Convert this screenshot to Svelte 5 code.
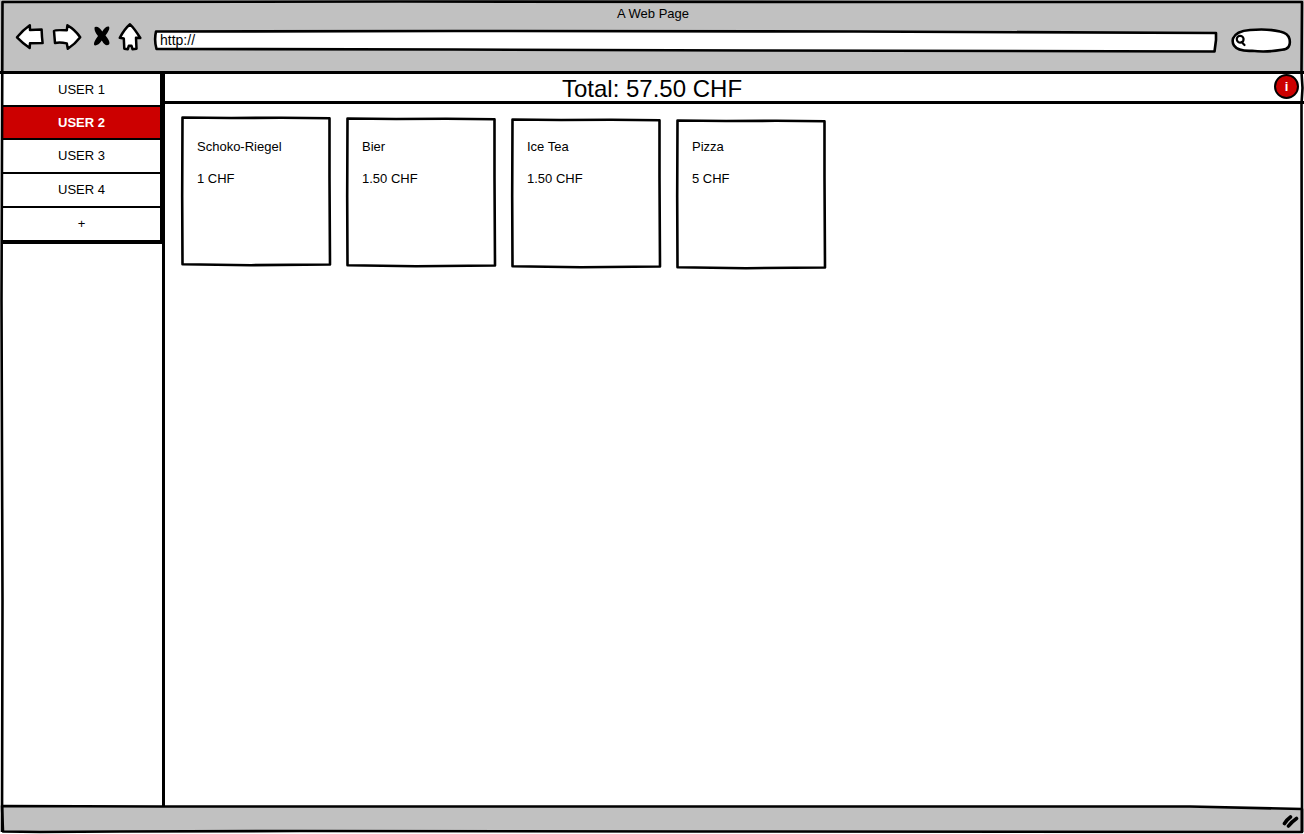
<script>
  let users = $state(['USER 1', 'USER 2', 'USER 3', 'USER 4']);
  let active = $state('USER 2');
  let address = $state('http://');
  let query = $state('');

  const products = [
    { name: 'Schoko-Riegel', price: '1 CHF' },
    { name: 'Bier', price: '1.50 CHF' },
    { name: 'Ice Tea', price: '1.50 CHF' },
    { name: 'Pizza', price: '5 CHF' }
  ];

  // Each hand-drawn card frame hangs slightly lower than the one before it.
  const cardFrame = (drop) =>
    `M1.5 ${0.5 + drop}L50 ${1 + drop}L100 ${0.8 + drop}L148.5 ${1.3 + drop}L148.5 60L149 ${147.5 + drop}L70 ${148.2 + drop}L1.5 ${147.3 + drop}L1.2 80Z`;

  function addUser() {
    users.push(`USER ${users.length + 1}`);
  }
</script>

{#snippet sketch(w, h, d, fill)}
  <svg class="sketch" viewBox="0 0 {w} {h}" preserveAspectRatio="none" aria-hidden="true">
    <path {d} {fill} stroke="#000" stroke-width="2.6" stroke-linejoin="round" vector-effect="non-scaling-stroke" />
  </svg>
{/snippet}

<div class="window">
  <header>
    <div class="title">A Web Page</div>
    <div class="toolbar">
      <nav aria-label="Browser">
        <button aria-label="Back">
          <svg width="30" height="30" viewBox="14 22 30 30"><path class="glyph" d="M17 37.3Q23 30 29.800 25.300L30 30L41.600 29.500L42 37L42.600 43L30 43.300L29.700 48Q23 43.500 17 37.300Z" /></svg>
        </button>
        <button aria-label="Forward">
          <svg width="30" height="30" viewBox="52 22 30 30"><path class="glyph" d="M54 31Q55 29.800 66.800 30.300L67.400 25.300Q75 29.500 80.200 37.200Q75 44 67.800 48.800L66.800 43.400Q60 42 55 43Z" /></svg>
        </button>
        <button aria-label="Stop">
          <svg width="20" height="30" viewBox="90 22 20 30"><path d="M94.800 27Q98.500 25.500 102.300 31.500Q105.500 26 108.800 26.500Q110.800 28.500 105.500 35.500Q110.800 42 109 44.500Q105.500 47.300 101.800 40.500Q98 46 94.500 45.300Q92.500 43.500 98 36Q93.500 30.500 94.800 27Z" /></svg>
        </button>
        <button aria-label="Home">
          <svg width="24" height="30" viewBox="118 22 24 30"><path class="glyph" d="M130 24.300Q134.500 28.500 140.300 38L136 37.800L136.500 48.800L132.500 49.200L131.500 45.800L128.800 45.800L127.800 49.200L124.300 48.800L123.800 38.500L119.800 37.800Q124.500 29 130 24.300Z" /></svg>
        </button>
      </nav>
      <div class="field address">
        {@render sketch(1064, 24, 'M2 3.500L300 3L700 3.500L1062 5L1062 12L1060.500 23.500L600 22.500L300 21.500L2.500 21Q0 12 2 3.500Z', '#fff')}
        <input type="text" aria-label="Address" bind:value={address} />
      </div>
      <div class="field search">
        {@render sketch(62, 24, 'M3 10.500Q6 3 20 2Q38 0.500 50 3.500Q58 5 59.500 11Q61.500 21 52 21.800Q36 24.500 22 22.800Q8 23.500 4 17.500Q2 14.500 3 10.500Z', '#fff')}
        <svg class="lens" width="12" height="12" viewBox="0 0 12 12" aria-hidden="true"><path d="M8.500 4.500A3.400 3.400 0 1 0 6 8.500Q9 8 8.500 4.500ZM6.500 8L9.500 11" /></svg>
        <input type="text" aria-label="Search" bind:value={query} />
      </div>
    </div>
  </header>

  <div class="body">
    <aside>
      <div class="users">
        {#each users as user}
          <button class:active={user === active} onclick={() => (active = user)}>{user}</button>
        {/each}
        <button aria-label="Add user" onclick={addUser}>+</button>
      </div>
    </aside>
    <main>
      <div class="total">
        <h1>Total: 57.50 CHF</h1>
        <button class="info" aria-label="Information">i</button>
      </div>
      <div class="cards">
        {#each products as product, i}
          <button class="card">
            {@render sketch(150, 150, cardFrame(i), '#fff')}
            <span>{product.name}</span>
            <span>{product.price}</span>
          </button>
        {/each}
      </div>
    </main>
  </div>

  <footer>
    {@render sketch(1304, 28, 'M2 0L160 0.500L700 0.500L1100 0.500L1190 0.500L1302 3L1302 26L700 25.500L300 25L120 25.500L40 26L3 25.500Z', '#c1c1c1')}
    <svg class="grip" width="18" height="16" viewBox="0 0 18 16" aria-hidden="true"><path d="M3.500 11.500Q6 7.500 9.500 5M7.500 14Q10.500 10 15.500 6.500" /></svg>
  </footer>

  <div class="outline">
    {@render sketch(1304, 834, 'M2 832L2.500 600L1.500 300L2.500 2L400 1.500L900 2L1302 2L1301.500 72L1302.500 88L1301.500 104L1302 500L1302 832', 'none')}
  </div>
</div>

<style>
  :global(body) {
    margin: 0;
    background: #fff;
  }
  .window {
    position: relative;
    display: flex;
    flex-direction: column;
    box-sizing: border-box;
    min-height: 100vh;
    overflow: hidden;
    font: 13px/16px 'Liberation Sans', Arial, sans-serif;
    color: #000;
  }
  button,
  input {
    margin: 0;
    padding: 0;
    border: 0;
    background: none;
    color: inherit;
    font: inherit;
  }
  button {
    cursor: pointer;
  }
  svg {
    display: block;
  }
  .sketch {
    position: absolute;
    inset: 0;
    width: 100%;
    height: 100%;
    overflow: visible;
    pointer-events: none;
  }
  .outline {
    position: absolute;
    inset: 0;
    pointer-events: none;
  }
  header {
    box-sizing: border-box;
    height: 74px;
    padding: 6px 12px 0 14px;
    background: #c1c1c1;
    border-bottom: 3px solid #000;
  }
  .title {
    text-align: center;
  }
  .toolbar {
    display: flex;
    align-items: flex-end;
    gap: 12px;
  }
  nav {
    display: flex;
    gap: 8px;
  }
  .glyph {
    fill: #fff;
    stroke: #000;
    stroke-width: 2.5;
    stroke-linejoin: round;
  }
  .field {
    position: relative;
    display: flex;
    align-items: center;
    height: 24px;
  }
  .field input {
    position: relative;
    flex: 1;
    min-width: 0;
    outline: none;
  }
  .address {
    flex: 1;
    padding: 0 6px;
  }
  .address input {
    font-size: 14px;
  }
  .search {
    width: 52px;
    padding: 0 5px;
  }
  .lens {
    position: relative;
    flex: none;
    overflow: visible;
    fill: none;
    stroke: #000;
    stroke-width: 2.2;
    stroke-linecap: round;
  }
  .body {
    flex: 1;
    display: flex;
  }
  aside {
    flex: none;
    box-sizing: border-box;
    width: 165px;
    padding-left: 3px;
    border-right: 3px solid #000;
  }
  .users {
    display: flex;
    flex-direction: column;
    border-right: 2px solid #000;
    border-bottom: 2px solid #000;
  }
  .users button {
    height: 34px;
    border-bottom: 2px solid #000;
  }
  .users button:nth-child(-n + 2) {
    height: 33px;
  }
  .users .active {
    background: #c00;
    color: #fff;
    font-weight: bold;
  }
  main {
    flex: 1;
    min-width: 0;
  }
  .total {
    display: grid;
    grid-template-columns: 1fr auto 1fr;
    align-items: start;
    height: 27px;
    padding-right: 5px;
    border-bottom: 3px solid #000;
  }
  h1 {
    grid-column: 2;
    margin: 0 160px 0 0;
    font-size: 24px;
    font-weight: normal;
    line-height: 30px;
  }
  .info {
    justify-self: end;
    width: 25px;
    height: 25px;
    border: 2px solid #000;
    border-radius: 50%;
    background: #c00;
    color: #fff;
    font-weight: bold;
  }
  .cards {
    display: flex;
    flex-wrap: wrap;
    gap: 15px;
    padding: 13px 16px;
  }
  .card {
    position: relative;
    display: flex;
    flex-direction: column;
    align-items: flex-start;
    gap: 16px;
    width: 150px;
    height: 150px;
    padding: 22px 16px;
    text-align: left;
  }
  .card span {
    position: relative;
  }
  footer {
    position: relative;
    display: flex;
    align-items: center;
    justify-content: flex-end;
    height: 28px;
    padding-right: 5px;
  }
  .grip {
    position: relative;
    fill: none;
    stroke: #000;
    stroke-width: 3.6;
    stroke-linecap: round;
  }
</style>
